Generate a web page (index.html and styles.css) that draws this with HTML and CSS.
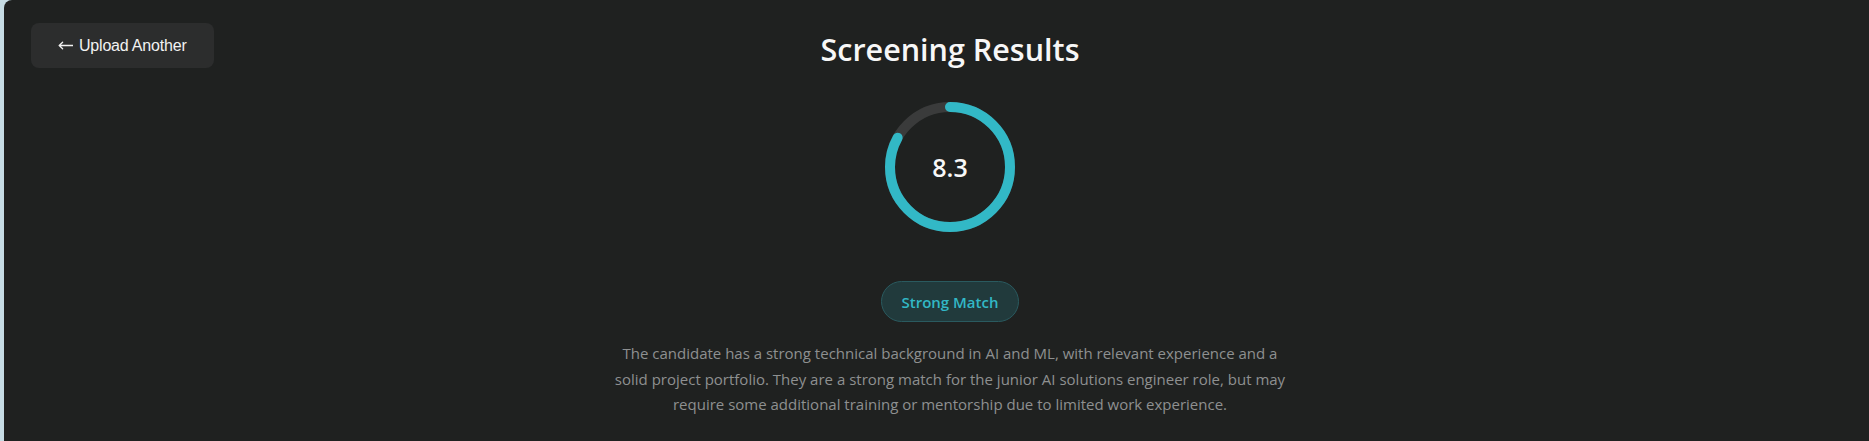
FILE: index.html
```html
<!DOCTYPE html>
<html lang="en">
<head>
<meta charset="utf-8">
<title>Screening Results</title>
<link rel="stylesheet" href="styles.css">
</head>
<body>
<div class="shell">
  <main class="card">
    <header class="header">
      <button class="back-btn" type="button"><svg class="back-icon" width="15" height="9" viewBox="0 0 15 9" aria-hidden="true"><path d="M15 4.5H1.2M4.6 1.2L1.2 4.5L4.6 7.8" fill="none" stroke="currentColor" stroke-width="1.3" stroke-linecap="round" stroke-linejoin="round"/></svg>Upload Another</button>
      <h1 class="title">Screening Results</h1>
      <span class="spacer"></span>
    </header>
    <section class="results">
      <div class="ring">
        <svg class="ring-svg" width="130" height="130" viewBox="0 0 130 130">
          <circle class="ring-track" cx="65" cy="65" r="60"></circle>
          <circle class="ring-progress" cx="65" cy="65" r="60" stroke-dasharray="312.9 376.99" transform="rotate(-90 65 65)"></circle>
        </svg>
        <span class="ring-value">8.3</span>
      </div>
      <span class="badge">Strong Match</span>
      <p class="summary">The candidate has a strong technical background in AI and ML, with relevant experience and a solid project portfolio. They are a strong match for the junior AI solutions engineer role, but may require some additional training or mentorship due to limited work experience.</p>
    </section>
  </main>
</div>
</body>
</html>
```

FILE: styles.css
```css
html, body {
  margin: 0;
  padding: 0;
  height: 100%;
}

body {
  background: #c6dce4;
  font-family: "Open Sans", "Noto Sans", sans-serif;
  overflow: hidden;
}

.shell {
  height: 100%;
  padding-left: 4px;
  box-sizing: border-box;
}

.card {
  height: 100%;
  box-sizing: border-box;
  background: #1f2120;
  border-top-left-radius: 8px;
  padding: 23px 0 0 27px;
}

.header {
  display: grid;
  grid-template-columns: 1fr auto 1fr;
  align-items: start;
}

.back-btn {
  justify-self: start;
  display: inline-flex;
  align-items: center;
  height: 45px;
  padding: 0 27px;
  border: none;
  border-radius: 8px;
  background: #2c2d2d;
  color: #f2f2f2;
  font-family: "Liberation Sans", Arial, sans-serif;
  font-size: 16px;
  letter-spacing: -0.2px;
  cursor: pointer;
}

.back-icon {
  display: block;
  margin-right: 6px;
  flex: none;
}

.title {
  margin: 8px 0 0;
  font-size: 30.5px;
  line-height: 36px;
  font-weight: 600;
  color: #f7f7f7;
}

.results {
  display: flex;
  flex-direction: column;
  align-items: center;
  margin-top: 34px;
}

.ring {
  position: relative;
  width: 130px;
  height: 130px;
}

.ring-svg {
  display: block;
}

.ring-track {
  fill: none;
  stroke: #3a3b3b;
  stroke-width: 10;
}

.ring-progress {
  fill: none;
  stroke: #32b8c6;
  stroke-width: 10;
  stroke-linecap: round;
}

.ring-value {
  position: absolute;
  inset: 0;
  display: flex;
  align-items: center;
  justify-content: center;
  font-size: 25px;
  font-weight: 600;
  color: #f7f7f7;
}

.badge {
  margin-top: 49px;
  box-sizing: border-box;
  height: 41px;
  padding: 0 20px;
  display: inline-flex;
  align-items: center;
  border: 1px solid #2a5a5f;
  border-radius: 999px;
  background: #213a3c;
  color: #32b8c6;
  font-size: 15px;
  font-weight: 600;
}

.summary {
  margin: 19px 0 0;
  max-width: 680px;
  text-align: center;
  font-size: 15px;
  line-height: 25.5px;
  color: #8e9090;
}
```
